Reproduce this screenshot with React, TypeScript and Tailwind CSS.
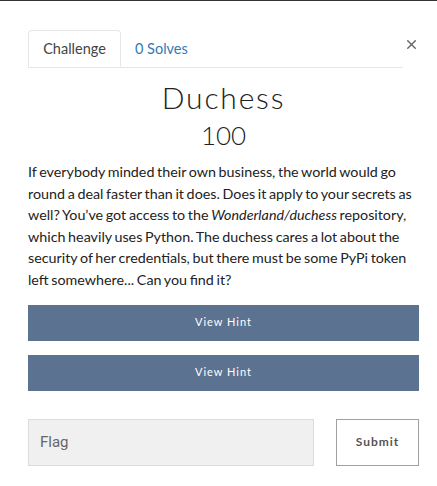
import { X } from 'lucide-react';

const description = (
  <>
    If everybody minded their own business, the world would go round a deal faster than it does. Does it
    apply to your secrets as well? You’ve got access to the <em>Wonderland/duchess</em> repository, which
    heavily uses Python. The duchess cares a lot about the security of her credentials, but there must be
    some PyPi token
    <br />
    left somewhere... Can you find it?
  </>
);

const App = () => {
  return (
    <div className="min-h-[486px] w-[437px] bg-white font-['Lato','Noto_Sans',sans-serif]">
      <div className="h-px bg-[#333]" />
      <div className="pl-[28px] pr-[18px] pt-[29px]">
        <div className="flex items-start">
          <div className="flex flex-1 border-b border-[#e6e6e6]">
            <button className="-mb-px h-[37px] w-[93px] rounded-t border border-[#e6e6e6] border-b-white bg-white text-[14.5px] text-[#444]">
              Challenge
            </button>
            <button className="h-[37px] px-[14px] text-[14.5px] text-[#337ab7]">0 Solves</button>
          </div>
          <button className="ml-[1px] mt-[7px] text-[#666]">
            <X size={15} strokeWidth={2.2} />
          </button>
        </div>

        <h2 className="mt-[12px] text-center text-[30px] font-light leading-[34px] tracking-[1.8px] text-[#222]">
          Duchess
        </h2>
        <h3 className="mt-[5px] text-center text-[26px] font-light leading-[32px] text-[#222]">100</h3>

        <p className="mt-[10px] text-[14.3px] leading-[21.6px] text-[#222] [word-spacing:-1px]">
          {description}
        </p>

        <div className="mt-[14px] flex flex-col gap-[14px]">
          <button className="h-[36px] w-full bg-[#5b7290] text-[11px] tracking-[1px] text-white">View Hint</button>
          <button className="h-[36px] w-full bg-[#5b7290] text-[11px] tracking-[1px] text-white">View Hint</button>
        </div>

        <div className="mt-[28px] flex gap-[22px]">
          <input
            placeholder="Flag"
            className="h-[47px] flex-1 border border-[#dcdcdc] bg-[#f0f0f0] px-[11px] font-['Roboto',sans-serif] text-[15px] text-[#555] placeholder:text-[#666]"
          />
          <button className="h-[47px] w-[83px] border border-[#a0a0a0] bg-white text-[12px] font-bold tracking-[1px] text-[#555]">
            Submit
          </button>
        </div>
      </div>
    </div>
  );
};

export default App;
